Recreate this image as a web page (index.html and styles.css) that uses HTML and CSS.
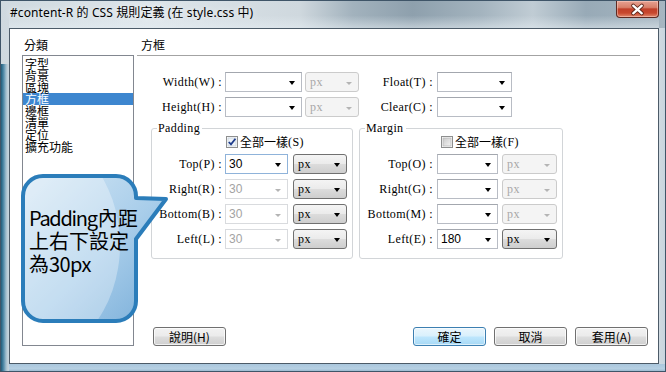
FILE: index.html
```html
<!DOCTYPE html>
<html lang="zh-Hant">
<head>
<meta charset="utf-8">
<title>CSS 規則定義</title>
<link rel="stylesheet" href="styles.css">
</head>
<body>
<div class="win">
  <div class="titlebar">
    <span class="title">#content-R 的 CSS 規則定義 (在 style.css 中)</span>
    <div class="close">
      <svg width="43" height="17" viewBox="0 0 43 17">
        <path d="M17 4.5 L26 12.5 M26 4.5 L17 12.5" stroke="#5a2418" stroke-width="4.2" stroke-linecap="round"/>
        <path d="M17 4.5 L26 12.5 M26 4.5 L17 12.5" stroke="#ffffff" stroke-width="2.4" stroke-linecap="round"/>
      </svg>
    </div>
  </div>
  <div class="client">
    <div class="left">
      <div class="cap">分類</div>
      <ul class="list">
        <li>字型</li>
        <li>背景</li>
        <li>區塊</li>
        <li class="sel">方框</li>
        <li>邊框</li>
        <li>清單</li>
        <li>定位</li>
        <li>擴充功能</li>
      </ul>
    </div>
    <div class="right">
      <div class="head">方框</div>
      <div class="toprow first">
        <span class="lbl w85">Width(W) :</span>
        <div class="cb w77 ml3"><span class="v"></span><i class="arr"></i></div>
        <div class="dd dis w54 ml3"><span class="v">px</span><i class="arr"></i></div>
        <span class="lbl w74">Float(T) :</span>
        <div class="cb w75 ml4"><span class="v"></span><i class="arr"></i></div>
      </div>
      <div class="toprow">
        <span class="lbl w85">Height(H) :</span>
        <div class="cb w77 ml3"><span class="v"></span><i class="arr"></i></div>
        <div class="dd dis w54 ml3"><span class="v">px</span><i class="arr"></i></div>
        <span class="lbl w74">Clear(C) :</span>
        <div class="cb w75 ml4"><span class="v"></span><i class="arr"></i></div>
      </div>
      <div class="groups">
        <fieldset class="grp pad">
          <legend>Padding</legend>
          <div class="chkrow">
            <svg class="chk" width="12" height="12" viewBox="0 0 12 12">
              <rect x="0.5" y="0.5" width="11" height="11" fill="#fff" stroke="#8e8f8f"/>
              <rect x="2" y="2" width="8" height="8" fill="#eef3f8" stroke="#c6d0da" stroke-width="0.8"/>
              <path d="M2.8 6 L5 8.4 L9.4 2.8" fill="none" stroke="#1e3c8c" stroke-width="1.8"/>
            </svg>
            <span class="cjk">全部一樣</span><span class="mono">(S)</span>
          </div>
          <div class="row">
            <span class="lbl w70">Top(P) :</span>
            <div class="cb focus w63 ml3"><span class="v">30</span><i class="arr"></i></div>
            <div class="dd w54 ml5"><span class="v">px</span><i class="arr"></i></div>
          </div>
          <div class="row">
            <span class="lbl w70">Right(R) :</span>
            <div class="cb dis w63 ml3"><span class="v">30</span><i class="arr"></i></div>
            <div class="dd w54 ml5"><span class="v">px</span><i class="arr"></i></div>
          </div>
          <div class="row">
            <span class="lbl w70">Bottom(B) :</span>
            <div class="cb dis w63 ml3"><span class="v">30</span><i class="arr"></i></div>
            <div class="dd w54 ml5"><span class="v">px</span><i class="arr"></i></div>
          </div>
          <div class="row">
            <span class="lbl w70">Left(L) :</span>
            <div class="cb dis w63 ml3"><span class="v">30</span><i class="arr"></i></div>
            <div class="dd w54 ml5"><span class="v">px</span><i class="arr"></i></div>
          </div>
        </fieldset>
        <fieldset class="grp mar">
          <legend>Margin</legend>
          <div class="chkrow">
            <svg class="chk" width="12" height="12" viewBox="0 0 12 12">
              <defs>
                <linearGradient id="ug" x1="0" y1="0" x2="1" y2="1">
                  <stop offset="0" stop-color="#c9c9c9"/>
                  <stop offset="1" stop-color="#f4f4f4"/>
                </linearGradient>
              </defs>
              <rect x="0.5" y="0.5" width="11" height="11" fill="#fff" stroke="#8e8f8f"/>
              <rect x="2" y="2" width="8" height="8" fill="url(#ug)" stroke="#b9b9b9" stroke-width="0.8"/>
            </svg>
            <span class="cjk">全部一樣</span><span class="mono">(F)</span>
          </div>
          <div class="row">
            <span class="lbl w73">Top(O) :</span>
            <div class="cb w61 ml4"><span class="v"></span><i class="arr"></i></div>
            <div class="dd dis w55 ml4"><span class="v">px</span><i class="arr"></i></div>
          </div>
          <div class="row">
            <span class="lbl w73">Right(G) :</span>
            <div class="cb w61 ml4"><span class="v"></span><i class="arr"></i></div>
            <div class="dd dis w55 ml4"><span class="v">px</span><i class="arr"></i></div>
          </div>
          <div class="row">
            <span class="lbl w73">Bottom(M) :</span>
            <div class="cb w61 ml4"><span class="v"></span><i class="arr"></i></div>
            <div class="dd dis w55 ml4"><span class="v">px</span><i class="arr"></i></div>
          </div>
          <div class="row">
            <span class="lbl w73">Left(E) :</span>
            <div class="cb w61 ml4"><span class="v">180</span><i class="arr"></i></div>
            <div class="dd w55 ml4"><span class="v">px</span><i class="arr"></i></div>
          </div>
        </fieldset>
      </div>
      <div class="btns">
        <div class="btn help">說明(H)</div>
        <div class="spacer"></div>
        <div class="btn def">確定</div>
        <div class="btn">取消</div>
        <div class="btn">套用(A)</div>
      </div>
    </div>
  </div>

  <svg class="bubble" width="152" height="158" viewBox="18 170 152 158">
    <defs>
      <linearGradient id="bg" x1="0" y1="0" x2="1" y2="1">
        <stop offset="0" stop-color="#d6e8f5"/>
        <stop offset="0.55" stop-color="#a8cdea"/>
        <stop offset="1" stop-color="#78add8"/>
      </linearGradient>
      <clipPath id="cl">
        <path d="M43 176 H116 A20 20 0 0 1 136 196 V198 L166 199 L136 239 V301 A20 20 0 0 1 116 321 H43 A20 20 0 0 1 23 301 V196 A20 20 0 0 1 43 176 Z"/>
      </clipPath>
    </defs>
    <path d="M43 176 H116 A20 20 0 0 1 136 196 V198 L166 199 L136 239 V301 A20 20 0 0 1 116 321 H43 A20 20 0 0 1 23 301 V196 A20 20 0 0 1 43 176 Z" fill="url(#bg)"/>
    <ellipse cx="22" cy="245" rx="98" ry="118" fill="#ffffff" opacity="0.32" clip-path="url(#cl)"/>
    <path d="M43 176 H116 A20 20 0 0 1 136 196 V198 L166 199 L136 239 V301 A20 20 0 0 1 116 321 H43 A20 20 0 0 1 23 301 V196 A20 20 0 0 1 43 176 Z" fill="none" stroke="#2b7dba" stroke-width="4" stroke-linejoin="round"/>
  </svg>
  <div class="bubble-text"><span class="lat">Padding</span>內距<br>上右下設定<br>為<span class="lat2">30px</span></div>
</div>
</body>
</html>
```

FILE: styles.css
```css
* { box-sizing: border-box; }
html, body { margin: 0; padding: 0; }
body {
  width: 666px;
  height: 372px;
  overflow: hidden;
  font-family: "Noto Sans CJK TC", sans-serif;
  font-size: 12px;
  color: #000;
}

.win {
  position: relative;
  width: 666px;
  height: 372px;
  padding: 0 7px 8px 9px;
  display: flex;
  flex-direction: column;
  background:
    linear-gradient(90deg, #1d4c65 0, #2f6e8d 2px, #5d92ae 4px, #9ebccc 6px, #c4d3dc 8px) 0 64px / 9px 100% no-repeat,
    linear-gradient(#aac7dd, #b6d0e3 60%, #8fb0c8) 0 100% / 100% 8px no-repeat,
    linear-gradient(90deg, #d0dae1 0, #c6d4de 100%) 659px 28px / 7px 100% no-repeat,
    linear-gradient(90deg, #cfd9df 0%, #dde5ea 22%, #cfd8de 45%, #a2b2bd 53%, #8ea0ad 62%, #a3b3be 72%, #c0ccd4 80%, #98aab7 88%, #a6b6c1 100%);
  box-shadow: inset 0 0 0 1px #3f5568;
}

.titlebar {
  height: 28px;
  display: flex;
  justify-content: space-between;
  align-items: flex-start;
  background: linear-gradient(rgba(255,255,255,0) 55%, rgba(230,238,243,0.55) 100%);
}
.title {
  padding: 5px 0 0 1px;
  font-family: "Noto Sans", "Noto Sans CJK TC", sans-serif;
  font-size: 12px;
  line-height: 16px;
  letter-spacing: 0.1px;
  color: #000;
  text-shadow: 0 0 6px rgba(255,255,255,0.9);
}
.close {
  width: 43px;
  height: 17px;
  margin-top: 1px;
  border: 1px solid #5e2a22;
  border-top: none;
  border-radius: 0 0 4px 4px;
  background: linear-gradient(#e6a192 0%, #d8806a 40%, #c0402a 50%, #c8482e 75%, #e18a6e 100%);
  box-shadow: inset 0 0 0 1px rgba(255,220,210,0.45);
  display: flex;
}
.close svg { display: block; }

.client {
  flex: 1;
  display: flex;
  gap: 3px;
  background: #fff;
  border: 1px solid #4c5b68;
  padding: 9px 10px 17px 12px;
}

.left {
  width: 112px;
  display: flex;
  flex-direction: column;
}
.cap, .head {
  font-size: 12px;
  line-height: 14px;
  padding-left: 2px;
}
.cap { margin-bottom: 3px; }
.list {
  flex: 1;
  margin: 0;
  padding: 2px 0 0;
  list-style: none;
  border: 1px solid #828790;
}
.list li {
  font-size: 12px;
  line-height: 11.8px;
  height: 11.8px;
  padding-left: 2px;
  white-space: nowrap;
}
.list li.sel {
  background: #3d86cf;
  color: #fff;
}

.right {
  flex: 1;
  display: flex;
  flex-direction: column;
}
.head {
  padding: 0 0 3px 4px;
  border-bottom: 1px solid #a3a3a3;
  margin-right: 8px;
}

.toprow, .row {
  display: flex;
  align-items: center;
  height: 20px;
}
.toprow { margin-top: 5px; }
.toprow.first { margin-top: 16px; }

.lbl, .mono, legend {
  font-family: "Liberation Serif", serif;
  font-size: 12px;
  letter-spacing: 0.4px;
  white-space: nowrap;
}
.lbl { text-align: right; flex: none; }
.w70 { width: 70px; }
.w73 { width: 73px; }
.w74 { width: 74px; }
.w85 { width: 85px; }
.w54 { width: 54px; }
.w55 { width: 55px; }
.w61 { width: 61px; }
.w63 { width: 63px; }
.w75 { width: 75px; }
.w77 { width: 77px; }
.ml3 { margin-left: 3px; }
.ml4 { margin-left: 4px; }
.ml5 { margin-left: 5px; }

.cb, .dd {
  flex: none;
  height: 20px;
  display: flex;
  align-items: center;
  justify-content: space-between;
  padding: 0 6px 0 3px;
}
.cb {
  background: #fff;
  border: 1px solid #b8bcc4;
  border-top-color: #a3a7ae;
}
.cb.focus { border-color: #8fb3da; }
.cb .v {
  font-family: "Liberation Sans", sans-serif;
  font-size: 12px;
  line-height: 14px;
}
.cb.dis { border-color: #d9dbde; }
.cb.dis .v { color: #a3a3a3; }

.arr {
  display: block;
  width: 0;
  height: 0;
  border-left: 3.5px solid transparent;
  border-right: 3.5px solid transparent;
  border-top: 4px solid #000;
  margin-top: 2px;
}
.cb.dis .arr, .dd.dis .arr { border-top-color: #b4b4b4; border-left-width: 3px; border-right-width: 3px; border-top-width: 3px; }

.dd {
  border: 1px solid #707070;
  border-radius: 3px;
  background: linear-gradient(#f4f4f4 0%, #ebebeb 48%, #dcdcdc 52%, #cecece 100%);
  padding-left: 4px;
}
.dd .v {
  font-family: "Liberation Serif", serif;
  font-size: 12px;
  letter-spacing: 0.4px;
  line-height: 14px;
}
.dd.dis {
  border-color: #cbcbcb;
  background: #f4f4f4;
}
.dd.dis .v { color: #a8a8a8; }

.groups {
  display: flex;
  gap: 6px;
  margin: 4px 0 0 14px;
}
.grp {
  margin: 0;
  padding: 0 0 9px;
  border: 1px solid #d2d5d8;
  border-radius: 3px;
  display: flex;
  flex-direction: column;
  gap: 5px;
  min-width: 0;
}
.grp.pad { width: 202px; }
.grp.mar { width: 204px; }
.grp legend {
  margin-left: 5px;
  padding: 0 2px 0 1px;
  line-height: 14px;
}
.chkrow {
  display: flex;
  align-items: center;
  height: 14px;
  margin-bottom: 0;
}
.pad .chkrow { padding-left: 74px; }
.mar .chkrow { padding-left: 81px; }
.chk { display: block; margin-right: 2px; flex: none; }
.cjk {
  font-family: "Noto Sans CJK TC", sans-serif;
  font-size: 12px;
  line-height: 14px;
}

.btns {
  margin-top: auto;
  display: flex;
  align-items: flex-end;
  gap: 8px;
}
.spacer { flex: 1; }
.btn {
  width: 73px;
  height: 19px;
  border: 1px solid #707070;
  border-radius: 3px;
  background: linear-gradient(#f2f2f2 0%, #ebebeb 48%, #dddddd 52%, #cfcfcf 100%);
  box-shadow: inset 0 0 0 1px rgba(255,255,255,0.7);
  font-size: 12px;
  line-height: 17px;
  text-align: center;
}
.btn.help { margin-left: 16px; }
.btn.def {
  border-color: #3c7fb1;
  background: linear-gradient(#eaf6fd 0%, #d9f0fc 48%, #bee6fd 52%, #a7d9f5 100%);
  box-shadow: inset 0 0 0 1px rgba(255,255,255,0.6);
}

.bubble {
  position: absolute;
  left: 18px;
  top: 170px;
}
.bubble-text {
  position: absolute;
  left: 29px;
  top: 206px;
  font-family: "Noto Sans CJK TC", sans-serif;
  font-size: 20px;
  line-height: 23px;
  color: #000;
  white-space: nowrap;
}
.bubble-text .lat { letter-spacing: -1.3px; margin-right: 1px; }
.bubble-text .lat2 { letter-spacing: -0.6px; }
```
